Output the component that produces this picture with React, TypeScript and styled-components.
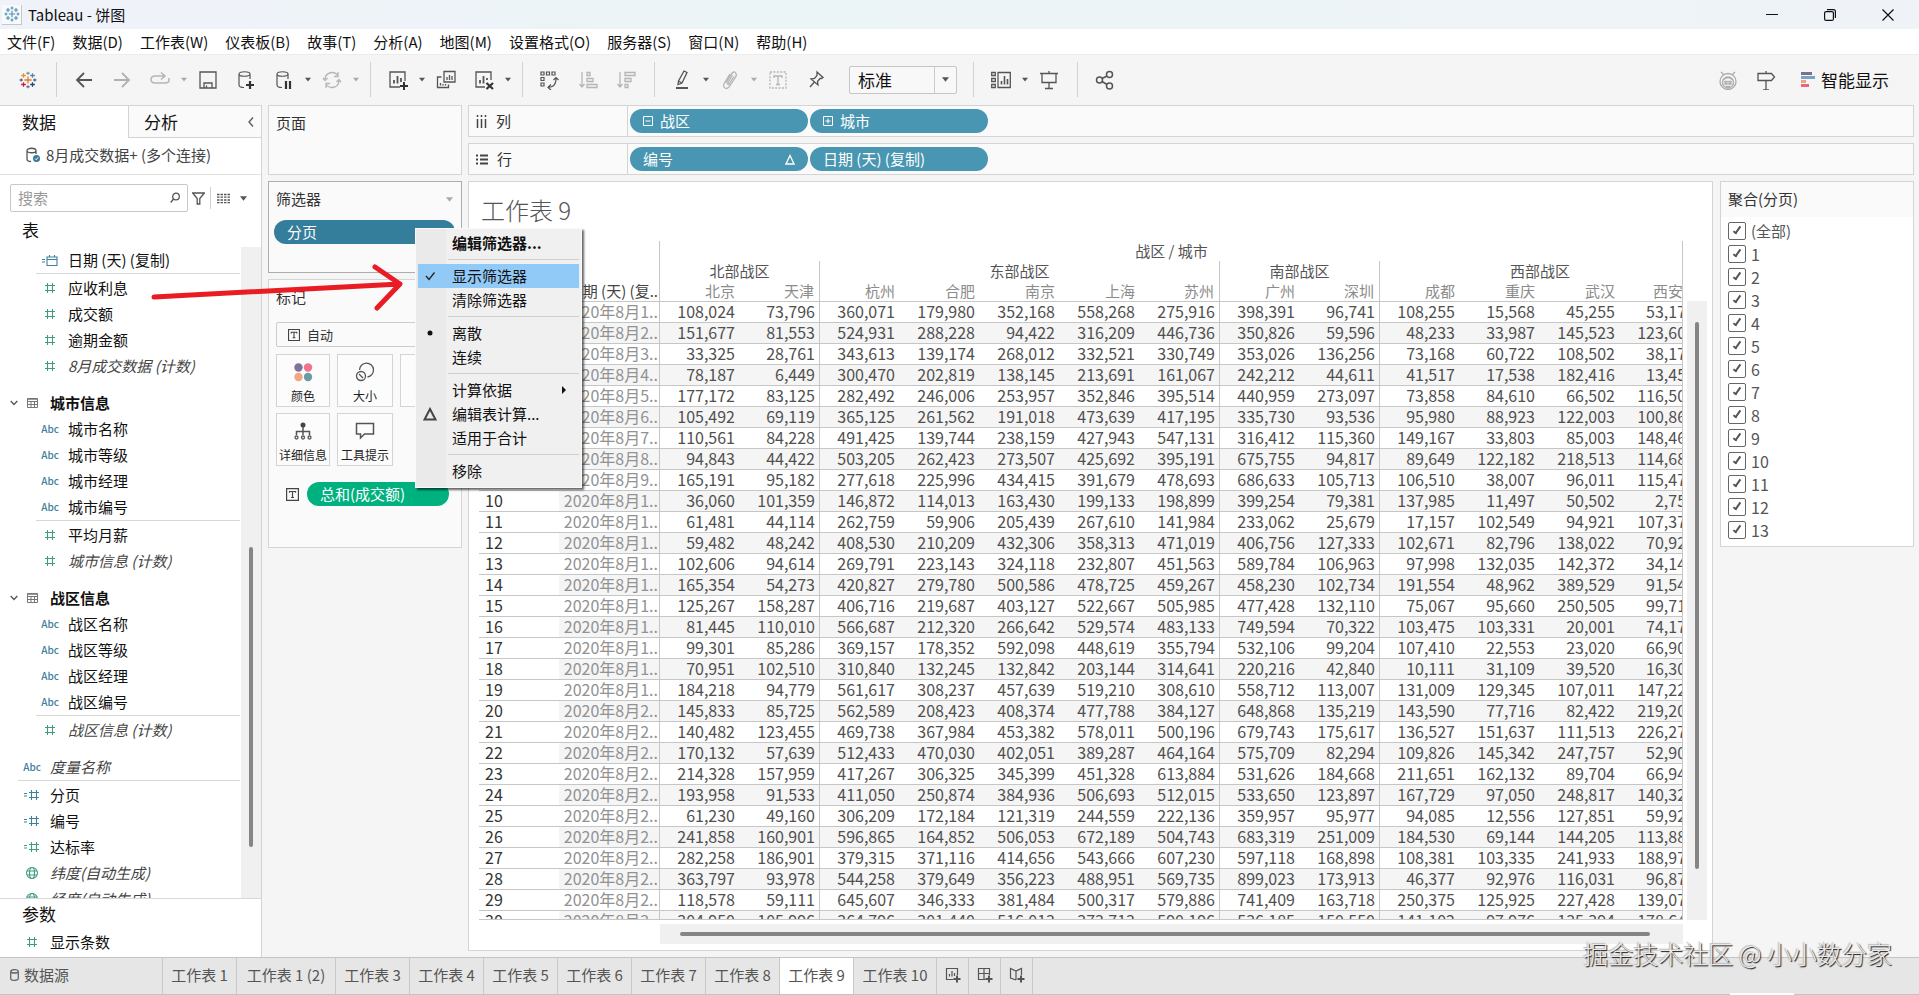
import React from "react";
import styled, { createGlobalStyle, css } from "styled-components";

const sans = `"Noto Sans CJK SC", "Noto Sans", sans-serif`;

const GlobalStyle = createGlobalStyle`
  *, *::before, *::after { box-sizing: border-box; }
  body { margin: 0; background: #f5f5f5; color: #111; font: 15px/20px ${sans}; }
  button, input, select { font: inherit; color: inherit; }
  svg { display: block; flex: none; }
`;

/* ---------- icons ---------- */

type IconProps = { w?: number; h?: number; color?: string; sw?: number; children: React.ReactNode };

const Icon = ({ w = 20, h = 20, color = "#555", sw = 1.3, children }: IconProps) => (
  <svg width={w} height={h} viewBox={`0 0 ${w} ${h}`} fill="none" stroke={color} strokeWidth={sw} aria-hidden="true">
    {children}
  </svg>
);

const crosses: [number, number, number, string][] = [
  [10, 10, 4, "#e8762c"],
  [10, 2.5, 1.8, "#7199a6"],
  [10, 17.5, 1.8, "#7b6f9b"],
  [2.5, 10, 1.8, "#5b6591"],
  [17.5, 10, 1.8, "#5b6591"],
  [5, 5, 2.6, "#eb912c"],
  [15, 5, 2.6, "#59879b"],
  [5, 15, 2.6, "#c72035"],
  [15, 15, 2.6, "#1f447e"],
];

const Logo = ({ size = 20, mono }: { size?: number; mono?: string }) => (
  <svg width={size} height={size} viewBox="0 0 20 20" aria-hidden="true">
    {crosses.map(([x, y, r, c]) => (
      <path key={`${x}-${y}`} d={`M${x - r} ${y}H${x + r}M${x} ${y - r}V${y + r}`} stroke={mono || c} strokeWidth={1.4} />
    ))}
  </svg>
);

const CaretIcon = ({ color = "#555", w = 7 }: { color?: string; w?: number }) => (
  <svg width={w} height="5" viewBox="0 0 8 5" aria-hidden="true">
    <path d="M0 0H8L4 5Z" fill={color} />
  </svg>
);

const BackIcon = () => <Icon sw={1.8}><path d="M18 10H3M10 3L3 10L10 17" /></Icon>;
const ForwardIcon = () => <Icon sw={1.8} color="#b0b0b0"><path d="M2 10H17M10 3L17 10L10 17" /></Icon>;
const RedoIcon = () => (
  <Icon color="#b5b5b5" sw={1.5}><path d="M14 6H5Q1 6 1 9.500T5 13H15Q19 13 19 10V8M11 2.500L15 6L11 9.500" /></Icon>
);
const SaveIcon = () => <Icon><path d="M2 2H18V18H2ZM6 18V13H14V18M8.500 18V15.500" /></Icon>;
const Cylinder = () => <path d="M3 4V15C3 17 6 17.500 8 17.500M14 4V9M3 4C3 1 14 1 14 4S3 7 3 4" />;
const AddDataIcon = () => (
  <Icon sw={1.2}><Cylinder /><path d="M14 11V19M10 15H18" stroke="#333" strokeWidth="2.200" /></Icon>
);
const PauseDataIcon = () => (
  <Icon sw={1.2}><Cylinder /><path d="M12 11V19M16 11V19" stroke="#333" strokeWidth="2.200" /></Icon>
);
const RefreshIcon = () => (
  <Icon color="#b5b5b5"><path d="M3 9A7 7 0 0 1 16 6M17 11A7 7 0 0 1 4 14M16 2V6.500H12M4 18V13.500H8M1 8L3 10.500L5.500 8M14.500 12L17 9.500L19 12" /></Icon>
);
const NewSheetIcon = () => (
  <Icon><path d="M12 17H2V2H17V11" /><path d="M6 13.500V10M9.500 13.500V6M13 12V8" strokeWidth="1.800" /><path d="M16 12V20M12 16H20" stroke="#333" strokeWidth="2" /></Icon>
);
const DuplicateIcon = () => (
  <Icon><path d="M8 1.500H19V12H8ZM5.500 7H1.500V17.500H12.500V14.500" /><path d="M11 10V7M13.500 10V5M16 10V6M4.500 15.500V13M7 15.500V14M9.500 15.500V14" /></Icon>
);
const ClearIcon = () => (
  <Icon><path d="M11 17H2V2H17V10" /><path d="M6 13.500V10M9.500 13.500V6M13 10V8" strokeWidth="1.800" /><path d="M12.500 13L19 19M19 13L12.500 19" stroke="#333" strokeWidth="2.200" /></Icon>
);
const SwapIcon = () => (
  <Icon sw={1.2}><path d="M1 2H4V5H1ZM6.500 2H9.500V5H6.500ZM12 2H15V5H12ZM1 7.500H4V10.500H1ZM1 13H4V16H1ZM8 17.500Q16.500 17 16 8M13.500 10L16 7.500L18.500 10M11 14.500L8 17.500L11 20" /></Icon>
);
const SortAscIcon = () => (
  <Icon color="#b5b5b5"><path d="M4 2V17M1.500 14L4 17L6.500 14M9 2.500H12V5.500H9ZM9 8.500H15V11.500H9ZM9 14.500H19V17.500H9Z" /></Icon>
);
const SortDescIcon = () => (
  <Icon color="#b5b5b5"><path d="M4 2V17M1.500 14L4 17L6.500 14M9 2.500H19V5.500H9ZM9 8.500H15V11.500H9ZM9 14.500H12V17.500H9Z" /></Icon>
);
const HighlightIcon = () => (
  <Icon><path d="M12 1L15 2.500L10 13L6 14.500L6.500 11ZM6.500 11L10 13" /><path d="M4 18H16" strokeWidth="2" /></Icon>
);
const ClipIcon = () => (
  <Icon color="#b5b5b5"><path d="M6 13L11 4.500Q14 0 16 3.500Q17 5 15 8L9 17Q6 20 4 17Q3 15 5 12L10 4M12.500 5L7.500 13.500Q8 15.500 9.500 13.500L14 6.500" /></Icon>
);
const TextBoxIcon = () => (
  <Icon color="#b5b5b5"><path d="M2 2H18V18H2Z" strokeDasharray="2 1.400" /><path d="M6 8V6H14V8M10 6V14.500M8 14.500H12" /></Icon>
);
const PinIcon = () => (
  <Icon><path d="M11 2L17 7.500L15.500 8.500H14L11.500 11.500L12 15L5 9L8.500 8.500L11 5.500ZM8.500 12L4 17" /></Icon>
);
const CardsIcon = () => (
  <Icon><path d="M.7 2.500H4.300V5.500H.7ZM.7 8.500H4.300V11.500H.7ZM.7 14.500H4.300V17.500H.7ZM7 2.500H19.300V17.500H7Z" /><path d="M10.500 14.500V11M13.500 14.500V6M16.500 14.500V9" strokeWidth="1.600" /></Icon>
);
const PresentIcon = () => <Icon><path d="M1 3.500H19M3 3.500V12.500H17V3.500M10 1V3M10 12.500V18.500M6 18.500H14" /></Icon>;
const ShareIcon = () => (
  <Icon sw={1.5}><circle cx="4.500" cy="10" r="3" /><circle cx="14.500" cy="4.500" r="3" /><circle cx="14.500" cy="16" r="3" /><path d="M7 8.500L12 6M7 11.500L12 14.500" /></Icon>
);
const RobotIcon = () => (
  <Icon color="#aaa"><circle cx="10" cy="11.500" r="8" /><circle cx="10" cy="12.500" r="5.500" /><path d="M3 2L6 5M17 2L14 5M5 10Q10 5 15 10M7 11.500H9V14H7ZM11 11.500H13V14H11ZM8 16.500H12" /></Icon>
);
const SignIcon = () => <Icon><path d="M2 3.500H15.500L18.500 7L15.500 10.500H2ZM10 1V3.500M10 10.500V20M7 20H13" /></Icon>;
const ShowMeIcon = () => (
  <svg width="14" height="16" aria-hidden="true">
    <rect width="11" height="3" fill="#7d6d93" /><rect y="4" width="14" height="3" fill="#76a3c6" />
    <rect y="8" width="5" height="3" fill="#eda37e" /><rect y="12" width="8" height="3" fill="#e8677c" />
  </svg>
);

const blue = "#417e9c";
const green = "#3f9c83";

const HashIcon = ({ color }: { color: string }) => (
  <Icon w={12} h={12} color={color} sw={1.1}><path d="M3.500 1V11M8.500 1V11M1 3.500H11M1 8.500H11" /></Icon>
);
const CalcHashIcon = ({ color }: { color: string }) => (
  <Icon w={16} h={12} color={color} sw={1.1}><path d="M7.500 1V11M12.500 1V11M5 3.500H15M5 8.500H15M0 4.500H3M0 7H3" /></Icon>
);
const CalcDateIcon = () => (
  <Icon w={16} h={13} color={blue} sw={1.1}><path d="M5 3H15V11.500H5ZM5 5.500H15M7.500 1V3.500M12.500 1V3.500M0 5.500H3M0 8H3" /></Icon>
);
const GlobeIcon = () => (
  <Icon w={14} h={14} color={green} sw={1.1}><circle cx="7" cy="7" r="5.500" /><ellipse cx="7" cy="7" rx="2.500" ry="5.500" /><path d="M2 5H12M2 9H12" /></Icon>
);
const TableIcon = () => (
  <Icon w={12} h={12} color="#777" sw={1}><path d="M.5 1.500H10.500V10.500H.5ZM.5 4.500H10.500M.5 7.500H10.500M4 4.500V10.500M7.500 4.500V10.500" /><path d="M.5 2H10.500" strokeWidth="1.500" /></Icon>
);
const ChevronIcon = () => <Icon w={8} h={6} color="#555"><path d="M.7 1L4 4.500L7.300 1" /></Icon>;
const TIcon = ({ size = 13 }: { size?: number }) => (
  <svg width={size} height={size} viewBox="0 0 13 13" fill="none" stroke="#444" strokeWidth="1.200" aria-hidden="true">
    <path d="M.6 .6H12.400V12.400H.6ZM3.500 4.800V3.500H9.500V4.800M6.500 3.500V9.500M5 9.500H8" />
  </svg>
);

/* ---------- page frame ---------- */

const Page = styled.div`
  position: relative;
  display: flex;
  flex-direction: column;
  height: 100vh;
  overflow: hidden;
`;

const TitleBar = styled.header`
  display: flex;
  align-items: center;
  gap: 6px;
  flex: none;
  height: 29px;
  padding: 0 2px;
  background: linear-gradient(90deg, #f0f2f9, #ebf4f7 40%, #eff3f8);
`;

const AppBadge = styled.span`
  display: grid;
  place-items: center;
  width: 20px;
  height: 20px;
  border: solid #c3c8cf;
  border-width: 0 1px 1px 0;
  background: #f7f9fb;
`;

const TitleText = styled.h1`
  flex: 1;
  margin: 0;
  font-size: 15px;
  font-weight: 400;
`;

const WindowControls = styled.div`
  display: flex;
`;

const WindowButton = styled.button`
  display: grid;
  place-items: center;
  width: 58px;
  height: 27px;
  padding: 0;
  border: 0;
  background: none;
`;

const MenuBar = styled.nav`
  display: flex;
  align-items: center;
  gap: 17px;
  flex: none;
  height: 25px;
  padding: 0 7px;
  background: #fff;
`;

const MenuButton = styled.button`
  padding: 0;
  border: 0;
  background: none;
  color: #111;
`;

const Toolbar = styled.div`
  display: flex;
  align-items: center;
  flex: none;
  height: 51px;
  padding: 0 30px 1px 9px;
  border-top: 1px solid #ececec;
  background: #f5f5f5;
`;

const Tool = styled.button`
  display: grid;
  place-items: center;
  width: 38px;
  height: 32px;
  padding: 0;
  border: 0;
  background: none;
`;

const CaretTool = styled(Tool)`
  width: 10px;
`;

const Divider = styled.span`
  width: 1px;
  height: 35px;
  margin: 0 8px 0 9px;
  background: #d2d2d2;
`;

const SelectBox = styled.span<{ $w?: number }>`
  display: flex;
  align-items: center;
  position: relative;
  width: ${(p) => (p.$w ? `${p.$w}px` : "auto")};
`;

const FitBox = styled(SelectBox)`
  margin: 0 7px 0 14px;
`;

const FitSelect = styled.select`
  appearance: none;
  width: 100%;
  height: 28px;
  padding: 0 8px;
  border: 1px solid #c6c6c6;
  border-radius: 2px;
  background: linear-gradient(#ccc, #ccc) 84px 0 / 1px 26px no-repeat #f8f8f8;
  font-size: 17px;
  line-height: 24px;
`;

const SelectCaret = styled.span`
  position: absolute;
  right: 8px;
  pointer-events: none;
`;

const Spacer = styled.span`
  flex: 1;
`;

const ShowMe = styled.button`
  display: flex;
  align-items: center;
  gap: 6px;
  margin-left: 16px;
  padding: 0;
  border: 0;
  background: none;
  font-size: 17px;
  line-height: 24px;
`;

const Workspace = styled.main`
  display: flex;
  gap: 6px;
  flex: 1;
  min-height: 0;
  padding-right: 5px;
`;

/* ---------- data pane ---------- */

const DataPane = styled.aside`
  display: flex;
  flex-direction: column;
  flex: none;
  width: 262px;
  border: solid #d4d4d4;
  border-width: 1px 1px 0 0;
  background: #fff;
`;

const PaneTabs = styled.div`
  display: flex;
  flex: none;
  height: 32px;
`;

const PaneTab = styled.button<{ $active?: boolean }>`
  display: flex;
  align-items: center;
  justify-content: space-between;
  width: ${(p) => (p.$active ? "128px" : "133px")};
  padding: 0 7px 0 ${(p) => (p.$active ? "22px" : "15px")};
  border: 0 solid #d4d4d4;
  border-width: ${(p) => (p.$active ? "0" : "0 0 1px 1px")};
  background: ${(p) => (p.$active ? "#fff" : "#fafafa")};
  font-size: 17px;
  line-height: 24px;
`;

const SourceRow = styled.button`
  display: flex;
  align-items: center;
  gap: 5px;
  flex: none;
  height: 37px;
  padding: 0 26px 2px;
  border: 0;
  border-bottom: 1px solid #e2e2e2;
  background: none;
  color: #444;
`;

const SearchRow = styled.div`
  display: flex;
  align-items: center;
  flex: none;
  height: 28px;
  margin: 9px 10px 0;
`;

const SearchField = styled.label`
  display: flex;
  align-items: center;
  width: 178px;
  height: 28px;
  padding: 0 7px;
  border: 1px solid #c8c8c8;
  border-radius: 2px;
`;

const SearchInput = styled.input`
  flex: 1;
  min-width: 0;
  padding: 0;
  border: 0;
  outline: 0;
  background: none;
  &::placeholder { color: #999; opacity: 1; }
`;

const SearchTool = styled.button<{ $ruled?: boolean }>`
  display: flex;
  align-items: center;
  gap: 10px;
  height: 22px;
  padding: 0 ${(p) => (p.$ruled ? 6 : 5)}px 0 ${(p) => (p.$ruled ? 6 : 4)}px;
  border: 0;
  border-left: ${(p) => (p.$ruled ? "1px solid #d0d0d0" : "0")};
  background: none;
`;

const PaneHeading = styled.h2`
  flex: none;
  margin: 0;
  padding-left: 22px;
  font-size: 17px;
  font-weight: 400;
  line-height: 35px;
`;

const FieldScroller = styled.div`
  display: flex;
  flex: 1;
  min-height: 0;
  overflow: hidden;
`;

const FieldList = styled.ul`
  flex: 1;
  margin: 0;
  padding: 0;
  list-style: none;
`;

const FieldItem = styled.li<{ $depth: number; $ruled?: boolean; $gap?: boolean }>`
  margin-top: ${(p) => (p.$gap ? "11px" : "0")};
  ${(p) =>
    p.$ruled &&
    css`
      &::after {
        content: "";
        display: block;
        height: 1px;
        margin: 0 1px 1px ${p.$depth * 18}px;
        background: #d8d8d8;
      }
    `}
`;

const FieldButton = styled.button<{ $depth: number; $look?: "italic" | "bold" }>`
  display: grid;
  grid-template-columns: 36px 1fr;
  align-items: center;
  width: 100%;
  height: 26px;
  padding: 0 0 0 ${(p) => p.$depth * 18 - 4}px;
  border: 0;
  background: none;
  text-align: left;
  font-weight: ${(p) => (p.$look === "bold" ? 700 : 400)};
  font-style: ${(p) => (p.$look === "italic" ? "italic" : "normal")};
  color: ${(p) => (p.$look === "italic" ? "#444" : "#111")};
`;

const FieldIcon = styled.span`
  display: grid;
  justify-items: center;
  width: 36px;
`;

const GroupIcons = styled.span`
  display: flex;
  align-items: center;
  gap: 9px;
  width: 36px;
  margin-left: -4px;
`;

const AbcMark = styled.span`
  color: ${blue};
  font-size: 10px;
  font-weight: 500;
  font-style: normal;
`;

const Track = styled.div<{ $horizontal?: boolean }>`
  display: flex;
  flex: none;
  background: #f0f0f0;
  ${(p) => (p.$horizontal ? "height: 20px;" : "width: 20px;")}
`;

const ListTrack = styled(Track)`
  padding: 300px 8px 51px;
`;

const Thumb = styled.span`
  flex: 1;
  border-radius: 2px;
  background: #858585;
`;

const Parameters = styled.section`
  flex: none;
  height: 59px;
  border-top: 1px solid #d8d8d8;
`;

const ParamHeading = styled(PaneHeading)`
  line-height: 30px;
`;

/* ---------- cards ---------- */

const CardColumn = styled.section`
  display: flex;
  flex-direction: column;
  gap: 6px;
  flex: none;
  width: 194px;
`;

const Card = styled.section<{ $h: number; $strong?: boolean }>`
  position: relative;
  flex: none;
  height: ${(p) => p.$h}px;
  padding: 0 6px;
  border: 1px solid ${(p) => (p.$strong ? "#adadad" : "#d4d4d4")};
  background: #fafafa;
`;

const CardTitle = styled.h3`
  display: flex;
  align-items: center;
  justify-content: space-between;
  height: 36px;
  margin: 0;
  padding: 0 2px 2px 1px;
  color: #333;
  font-size: 15px;
  font-weight: 400;
`;

const Pill = styled.button<{ $bg: string; $w?: string }>`
  display: flex;
  align-items: center;
  gap: 7px;
  flex: none;
  width: ${(p) => p.$w || "178px"};
  height: 24px;
  padding: 0 13px;
  border: 0;
  border-radius: 12px;
  background: ${(p) => p.$bg};
  color: #fff;
`;

const PillFilter = styled(Pill)`
  margin: 2px 0 0 -1px;
`;

const MarkSelect = styled.select`
  appearance: none;
  width: 100%;
  height: 25px;
  padding: 0 0 0 30px;
  border: 1px solid #ccc;
  border-radius: 2px;
  background: none;
  color: #333;
  font-size: 13px;
`;

const MarkBox = styled(SelectBox)`
  margin: 6px 1px 7px;
`;

const MarkLead = styled.span`
  position: absolute;
  left: 12px;
`;

const MarkGrid = styled.div`
  display: grid;
  grid-template-columns: 54px 56px 56px;
  grid-auto-rows: 53px;
  gap: 6px 7px;
  margin: 0 1px;
`;

const MarkButton = styled.button`
  display: flex;
  flex-direction: column;
  align-items: center;
  justify-content: space-between;
  padding: 7px 0 1px;
  border: 1px solid #d4d4d4;
  background: #fcfcfc;
  color: #222;
  font-size: 12px;
  line-height: 18px;
  white-space: nowrap;
`;

const MarkPillRow = styled.div`
  display: flex;
  align-items: center;
  gap: 8px;
  margin: 16px 0 0 11px;
`;

/* ---------- context menu ---------- */

const ContextMenu = styled.ul`
  position: absolute;
  z-index: 3;
  top: 46px;
  left: 146px;
  width: 167px;
  margin: 0;
  padding: 2px 2px 4px;
  border: 1px solid #fafafa;
  background: linear-gradient(90deg, #eaeaea 30px, #f0f0f0 30px);
  box-shadow: 2px 2px 2px rgba(0, 0, 0, 0.6);
  list-style: none;
`;

const ContextItem = styled.button<{ $on?: boolean; $bold?: boolean }>`
  display: grid;
  grid-template-columns: 23px 1fr 17px;
  align-items: center;
  column-gap: 11px;
  width: 100%;
  height: 24px;
  padding: 0;
  border: 0;
  background: ${(p) => (p.$on ? "#91c9f7" : "none")};
  text-align: left;
  white-space: nowrap;
  font-weight: ${(p) => (p.$bold ? 700 : 400)};
`;

const ContextMark = styled.span`
  display: grid;
  justify-items: center;
`;

const ContextRule = styled.li`
  height: 9px;
  margin-left: 30px;
  border: solid transparent;
  border-width: 4px 0;
  background: #cfcfcf;
  background-clip: padding-box;
`;

/* ---------- shelves and view ---------- */

const ViewColumn = styled.section`
  display: flex;
  flex-direction: column;
  gap: 6px;
  flex: 1;
  min-width: 0;
  padding-bottom: 6px;
`;

const Shelf = styled.div`
  display: flex;
  align-items: center;
  gap: 2px;
  flex: none;
  height: 32px;
  border: 1px solid #d4d4d4;
  background: #fafafa;
`;

const ShelfLabel = styled.span`
  display: flex;
  align-items: center;
  gap: 9px;
  width: 159px;
  height: 30px;
  padding-left: 7px;
  border-right: 1px solid #d4d4d4;
  color: #333;
`;

const ViewRow = styled.div`
  display: flex;
  align-items: flex-start;
  gap: 7px;
  flex: 1;
  min-height: 0;
`;

const Sheet = styled.article`
  display: grid;
  grid-template-columns: minmax(0, 1fr) 20px;
  grid-template-rows: 59px minmax(0, 1fr) 20px;
  gap: 0 4px;
  flex: 1;
  min-width: 0;
  height: 100%;
  padding: 0 5px 6px 10px;
  border: 1px solid #d4d4d4;
  background: #fff;
`;

const SheetTitle = styled.h2`
  grid-column: 1 / -1;
  margin: 0;
  padding: 0 2px;
  color: #555;
  font-size: 24px;
  font-weight: 300;
  line-height: 56px;
`;

const TableClip = styled.div`
  overflow: hidden;
  margin-bottom: 4px;
  border: solid #c6c6c6;
  border-width: 0 1px 1px 0;
`;

const SheetTrackV = styled(Track)`
  margin: 60px 0 4px;
  padding: 21px 8px 51px;
`;

const SheetTrackH = styled(Track)`
  margin-left: 181px;
  padding: 8px 33px 8px 20px;
`;

const Crosstab = styled.table`
  table-layout: fixed;
  width: 1221px;
  border-collapse: separate;
  border-spacing: 0;
  color: #505050;
  font-size: 16px;
  line-height: 18px;
  white-space: nowrap;
`;

const Head = styled.th<{ $edge?: boolean; $align?: string; $tone?: string; $base?: boolean; $pad?: number }>`
  height: ${(p) => (p.$base ? 21 : 20)}px;
  padding: 0 ${(p) => p.$pad ?? 5}px 1px 0;
  border: solid #c6c6c6;
  border-width: 0 ${(p) => (p.$edge ? 1 : 0)}px ${(p) => (p.$base ? 1 : 0)}px 0;
  color: ${(p) => p.$tone || "#8c8c8c"};
  font-size: 15px;
  font-weight: 400;
  text-align: ${(p) => p.$align || "right"};
`;

const Cell = styled.td<{ $edge?: boolean; $cut?: boolean }>`
  height: 21px;
  padding: 0 ${(p) => (p.$cut ? 14 : p.$edge ? 4 : 5)}px 2px 0;
  border: solid #c6c6c6;
  border-width: 0 ${(p) => (p.$edge ? 1 : 0)}px 1px 0;
  text-align: right;
`;

const IndexCell = styled.th`
  padding: 0 6px 2px;
  border-bottom: 1px solid #c6c6c6;
  background: #fff;
  color: #333;
  font-weight: 400;
  text-align: left;
`;

const DateCell = styled(Cell)`
  padding: 0 1px 2px 0;
  color: #929292;
`;

const Row = styled.tr`
  &:nth-child(even) { background: #f5f5f5; }
`;

/* ---------- quick filter ---------- */

const QuickFilter = styled.fieldset`
  flex: none;
  width: 194px;
  margin: 0;
  padding: 0 0 5px;
  border: 1px solid #d4d4d4;
  background: #fff;
`;

const QuickTitle = styled.legend`
  float: left;
  width: 100%;
  height: 35px;
  margin-bottom: 2px;
  padding: 0 7px;
  background: #fafafa;
  color: #333;
  line-height: 34px;
`;

const CheckRow = styled.label<{ $small?: boolean }>`
  display: flex;
  align-items: center;
  gap: 5px;
  clear: both;
  height: 23px;
  padding-left: 7px;
  color: #555;
  font-size: ${(p) => (p.$small ? 15 : 16)}px;
`;

const Check = styled.input`
  appearance: none;
  display: grid;
  place-items: center;
  width: 18px;
  height: 18px;
  margin: 0;
  border: 1px solid #666;
  border-radius: 2px;
  background: #fff;
  &:checked::before {
    content: "";
    width: 4px;
    height: 9px;
    margin-bottom: 3px;
    border: solid #555;
    border-width: 0 2px 2px 0;
    transform: rotate(35deg);
  }
`;

/* ---------- sheet tabs and overlays ---------- */

const TabBar = styled.footer`
  display: flex;
  flex: none;
  height: 38px;
  border: solid #c4c4c4;
  border-width: 1px 0;
  background: #e6e6e6;
`;

const SheetTab = styled.button<{ $active?: boolean; $w: number }>`
  flex: none;
  width: ${(p) => p.$w}px;
  padding: 0 0 2px;
  border: 0;
  border-right: 1px solid #c8c8c8;
  background: ${(p) => (p.$active ? "#fff" : "none")};
  color: #555;
`;

const SourceTab = styled(SheetTab)`
  display: flex;
  align-items: center;
  gap: 5px;
  padding-left: 10px;
`;

const NewTab = styled(SheetTab)`
  display: grid;
  place-items: center;
`;

const Arrow = styled.svg`
  position: absolute;
  z-index: 2;
  top: 260px;
  left: 148px;
  pointer-events: none;
`;

const Watermark = styled.div`
  position: absolute;
  right: 27px;
  bottom: 25px;
  color: #e9e9e9;
  font-size: 25px;
  font-weight: 300;
  line-height: 34px;
  text-shadow: 1px 1px 1px #111, -1px -1px 1px #bbb;
`;

const EdgeStrip = styled.span`
  position: absolute;
  right: 125px;
  bottom: 0;
  width: 64px;
  height: 2px;
  background: #fff;
`;

/* ---------- data ---------- */

const menus = ["文件(F)", "数据(D)", "工作表(W)", "仪表板(B)", "故事(T)", "分析(A)", "地图(M)", "设置格式(O)", "服务器(S)", "窗口(N)", "帮助(H)"];

type Kind = "date" | "num" | "abc" | "group" | "cnumB" | "cnumG" | "geo";
type Field = { name: string; kind: Kind; depth: number; italic?: boolean; ruled?: boolean; gap?: boolean };

const fields: Field[] = [
  { name: "日期 (天) (复制)", kind: "date", depth: 2, ruled: true },
  { name: "应收利息", kind: "num", depth: 2 },
  { name: "成交额", kind: "num", depth: 2 },
  { name: "逾期金额", kind: "num", depth: 2 },
  { name: "8月成交数据 (计数)", kind: "num", depth: 2, italic: true },
  { name: "城市信息", kind: "group", depth: 1, gap: true },
  { name: "城市名称", kind: "abc", depth: 2 },
  { name: "城市等级", kind: "abc", depth: 2 },
  { name: "城市经理", kind: "abc", depth: 2 },
  { name: "城市编号", kind: "abc", depth: 2, ruled: true },
  { name: "平均月薪", kind: "num", depth: 2 },
  { name: "城市信息 (计数)", kind: "num", depth: 2, italic: true },
  { name: "战区信息", kind: "group", depth: 1, gap: true },
  { name: "战区名称", kind: "abc", depth: 2 },
  { name: "战区等级", kind: "abc", depth: 2 },
  { name: "战区经理", kind: "abc", depth: 2 },
  { name: "战区编号", kind: "abc", depth: 2, ruled: true },
  { name: "战区信息 (计数)", kind: "num", depth: 2, italic: true },
  { name: "度量名称", kind: "abc", depth: 1, italic: true, gap: true, ruled: true },
  { name: "分页", kind: "cnumB", depth: 1 },
  { name: "编号", kind: "cnumB", depth: 1 },
  { name: "达标率", kind: "cnumG", depth: 1 },
  { name: "纬度(自动生成)", kind: "geo", depth: 1, italic: true },
  { name: "经度(自动生成)", kind: "geo", depth: 1, italic: true },
];

const kindIcon: Record<Kind, React.ReactNode> = {
  date: <CalcDateIcon />,
  num: <HashIcon color={green} />,
  abc: <AbcMark>Abc</AbcMark>,
  group: null,
  cnumB: <CalcHashIcon color={blue} />,
  cnumG: <CalcHashIcon color={green} />,
  geo: <GlobeIcon />,
};

const regions: [string, number][] = [["北部战区", 2], ["东部战区", 5], ["南部战区", 2], ["西部战区", 4]];
const cities = ["北京", "天津", "杭州", "合肥", "南京", "上海", "苏州", "广州", "深圳", "成都", "重庆", "武汉", "西安"];
const edges = [1, 6, 8];

const rows = `
108,024 73,796 360,071 179,980 352,168 558,268 275,916 398,391 96,741 108,255 15,568 45,255 53,17
151,677 81,553 524,931 288,228 94,422 316,209 446,736 350,826 59,596 48,233 33,987 145,523 123,60
33,325 28,761 343,613 139,174 268,012 332,521 330,749 353,026 136,256 73,168 60,722 108,502 38,17
78,187 6,449 300,470 202,819 138,145 213,691 161,067 242,212 44,611 41,517 17,538 182,416 13,45
177,172 83,125 282,492 246,006 253,957 352,846 395,514 440,959 273,097 73,858 84,610 66,502 116,50
105,492 69,119 365,125 261,562 191,018 473,639 417,195 335,730 93,536 95,980 88,923 122,003 100,86
110,561 84,228 491,425 139,744 238,159 427,943 547,131 316,412 115,360 149,167 33,803 85,003 148,46
94,843 44,422 503,205 262,423 273,507 425,692 395,191 675,755 94,817 89,649 122,182 218,513 114,68
165,191 95,182 277,618 225,996 434,415 391,679 478,693 686,633 105,713 106,510 38,007 96,011 115,47
36,060 101,359 146,872 114,013 163,430 199,133 198,899 399,254 79,381 137,985 11,497 50,502 2,75
61,481 44,114 262,759 59,906 205,439 267,610 141,984 233,062 25,679 17,157 102,549 94,921 107,37
59,482 48,242 408,530 210,209 432,306 358,313 471,019 406,756 127,333 102,671 82,796 138,022 70,92
102,606 94,614 269,791 223,143 324,118 232,807 451,563 589,784 106,963 97,998 132,035 142,372 34,14
165,354 54,273 420,827 279,780 500,586 478,725 459,267 458,230 102,734 191,554 48,962 389,529 91,54
125,267 158,287 406,716 219,687 403,127 522,667 505,985 477,428 132,110 75,067 95,660 250,505 99,71
81,445 110,010 566,687 212,320 266,642 529,574 483,133 749,594 70,322 103,475 103,331 20,001 74,17
99,301 85,286 369,157 178,352 592,098 448,619 355,794 532,106 99,204 107,410 22,553 23,020 66,90
70,951 102,510 310,840 132,245 132,842 203,144 314,641 220,216 42,840 10,111 31,109 39,520 16,30
184,218 94,779 561,617 308,237 457,639 519,210 308,610 558,712 113,007 131,009 129,345 107,011 147,22
145,833 85,725 562,589 208,423 408,374 477,788 384,127 648,868 135,219 143,590 77,716 82,422 219,20
140,482 123,455 469,738 367,984 453,382 578,011 500,196 679,743 175,617 136,527 151,637 111,513 226,27
170,132 57,639 512,433 470,030 402,051 389,287 464,164 575,709 82,294 109,826 145,342 247,757 52,90
214,328 157,959 417,267 306,325 345,399 451,328 613,884 531,626 184,668 211,651 162,132 89,704 66,94
193,958 91,533 411,050 250,874 384,936 506,693 512,015 533,650 123,897 167,729 97,050 248,817 140,32
61,230 49,160 306,209 172,184 121,319 244,559 222,136 359,957 95,977 94,085 12,556 127,851 59,92
241,858 160,901 596,865 164,852 506,053 672,189 504,743 683,319 251,009 184,530 69,144 144,205 113,88
282,258 186,901 379,315 371,116 414,656 543,666 607,230 597,118 168,898 108,381 103,335 241,933 188,97
363,797 93,978 544,258 379,649 356,223 488,951 569,735 899,023 173,913 46,377 92,976 116,031 96,87
118,578 59,111 645,607 346,333 381,484 500,317 579,886 741,409 163,718 250,375 125,925 227,428 139,07
304,950 105,996 364,796 301,440 516,013 373,713 590,196 536,185 150,550 141,102 97,976 135,394 178,64
`.trim().split("\n").map((line) => line.split(" "));

type MenuEntry = { text?: string; mark?: "tick" | "dot" | "delta"; on?: boolean; bold?: boolean; sub?: boolean };

const contextEntries: MenuEntry[] = [
  { text: "编辑筛选器...", bold: true },
  {},
  { text: "显示筛选器", mark: "tick", on: true },
  { text: "清除筛选器" },
  {},
  { text: "离散", mark: "dot" },
  { text: "连续" },
  {},
  { text: "计算依据", sub: true },
  { text: "编辑表计算...", mark: "delta" },
  { text: "适用于合计" },
  {},
  { text: "移除" },
];

const contextMarks = {
  tick: <Icon w={10} h={10} color="#222"><path d="M1 5L4 8.500L9.500 1.500" /></Icon>,
  dot: <Icon w={6} h={6} color="none"><circle cx="3" cy="3" r="2.500" fill="#111" /></Icon>,
  delta: <Icon w={14} h={14} color="#444" sw={2}><path d="M7 2L12.500 12.500H1.500Z" /></Icon>,
};

const sheets: [string, number][] = [["1", 74], ["1 (2)", 99], ["3", 74], ["4", 74], ["5", 74], ["6", 74], ["7", 74], ["8", 74], ["9", 74], ["10", 83]];
const filterValues = ["(全部)", ...Array.from({ length: 13 }, (_, i) => String(i + 1))];

/* ---------- parts ---------- */

const tools: (React.ComponentType | "caret" | "pale" | "rule" | "fit")[] = [
  BackIcon, ForwardIcon, RedoIcon, "pale", SaveIcon, AddDataIcon, PauseDataIcon, "caret", RefreshIcon, "pale", "rule",
  NewSheetIcon, "caret", DuplicateIcon, ClearIcon, "caret", "rule",
  SwapIcon, SortAscIcon, SortDescIcon, "rule",
  HighlightIcon, "caret", ClipIcon, "pale", TextBoxIcon, PinIcon, "fit", "rule",
  CardsIcon, "caret", PresentIcon, "rule", ShareIcon,
];

const ToolbarRow = () => (
  <Toolbar role="toolbar">
    <Tool aria-label="Tableau"><Logo size={18} /></Tool>
    <Divider />
    {tools.map((T, i) => {
      if (T === "rule") return <Divider key={i} />;
      if (T === "caret" || T === "pale")
        return <CaretTool key={i} aria-label="更多"><CaretIcon w={6} color={T === "pale" ? "#aaa" : "#555"} /></CaretTool>;
      if (T === "fit")
        return (
          <FitBox key={i} $w={108}>
            <FitSelect aria-label="适合"><option>标准</option></FitSelect>
            <SelectCaret><CaretIcon /></SelectCaret>
          </FitBox>
        );
      return <Tool key={i} aria-label="工具"><T /></Tool>;
    })}
    <Spacer />
    <Tool aria-label="助手"><RobotIcon /></Tool>
    <Tool aria-label="导览"><SignIcon /></Tool>
    <ShowMe><ShowMeIcon />智能显示</ShowMe>
  </Toolbar>
);

const FieldRow = ({ f }: { f: Field }) => (
  <FieldItem $depth={f.depth} $ruled={f.ruled} $gap={f.gap}>
    <FieldButton $depth={f.depth} $look={f.kind === "group" ? "bold" : f.italic ? "italic" : undefined}>
      {f.kind === "group" ? (
        <GroupIcons><ChevronIcon /><TableIcon /></GroupIcons>
      ) : (
        <FieldIcon>{kindIcon[f.kind]}</FieldIcon>
      )}
      {f.name}
    </FieldButton>
  </FieldItem>
);

const SidePane = () => (
  <DataPane>
    <PaneTabs>
      <PaneTab $active>数据</PaneTab>
      <PaneTab>
        分析
        <Icon w={6} h={10} color="#555"><path d="M5 .5L1 5L5 9.500" /></Icon>
      </PaneTab>
    </PaneTabs>
    <SourceRow>
      <Icon w={15} h={16}>
        <path d="M1 3.500V12Q1 14.500 5 14.500M10 3.500V7M1 3.500C1 .5 10 .5 10 3.500S1 6.500 1 3.500" />
        <circle cx="10.500" cy="11.500" r="3.500" fill="#37799c" stroke="none" />
        <path d="M9 11.500L10.200 12.800L12.200 10.300" stroke="#fff" strokeWidth="1" />
      </Icon>
      8月成交数据+ (多个连接)
    </SourceRow>
    <SearchRow>
      <SearchField>
        <SearchInput aria-label="搜索" placeholder="搜索" />
        <Icon w={10} h={12}><circle cx="6" cy="4.500" r="3.300" /><path d="M3.500 7L.7 10.500" /></Icon>
      </SearchField>
      <SearchTool aria-label="筛选"><Icon w={13} h={13}><path d="M.7 1H12.300L7.800 6.500V12H5.200V6.500Z" /></Icon></SearchTool>
      <SearchTool $ruled aria-label="视图">
        <Icon w={13} h={11}><path d="M0 1.500H13M0 4.200H13M0 7H13M0 9.700H13" strokeDasharray="2.500 1" /></Icon>
        <CaretIcon />
      </SearchTool>
    </SearchRow>
    <PaneHeading>表</PaneHeading>
    <FieldScroller>
      <FieldList>{fields.map((f) => <FieldRow key={f.name} f={f} />)}</FieldList>
      <ListTrack><Thumb /></ListTrack>
    </FieldScroller>
    <Parameters>
      <ParamHeading>参数</ParamHeading>
      <FieldButton $depth={1}><FieldIcon><HashIcon color={green} /></FieldIcon>显示条数</FieldButton>
    </Parameters>
  </DataPane>
);

const Cards = () => (
  <CardColumn>
    <Card $h={70}><CardTitle>页面</CardTitle></Card>
    <Card $h={92} $strong>
      <CardTitle>筛选器<CaretIcon color="#aaa" /></CardTitle>
      <PillFilter $bg="#347d9b" $w="181px">分页</PillFilter>
      <ContextMenu>
        {contextEntries.map((e, i) =>
          e.text ? (
            <li key={i}>
              <ContextItem $on={e.on} $bold={e.bold}>
                <ContextMark>{e.mark && contextMarks[e.mark]}</ContextMark>
                {e.text}
                {e.sub && <svg width="5" height="8" aria-hidden="true"><path d="M0 0L4 4L0 8Z" fill="#111" /></svg>}
              </ContextItem>
            </li>
          ) : (
            <ContextRule key={i} />
          ),
        )}
      </ContextMenu>
    </Card>
    <Card $h={269}>
      <CardTitle>标记</CardTitle>
      <MarkBox>
        <MarkLead><TIcon size={12} /></MarkLead>
        <MarkSelect aria-label="标记类型"><option>自动</option></MarkSelect>
      </MarkBox>
      <MarkGrid>
        <MarkButton>
          <Icon w={20} h={20} color="none">
            <circle cx="5.500" cy="5.500" r="4.200" fill="#82719b" /><circle cx="15" cy="5.500" r="4.200" fill="#f0748b" />
            <circle cx="5.500" cy="15" r="4.200" fill="#f0a683" /><circle cx="15" cy="15" r="4.200" fill="#6b9ba3" />
          </Icon>
          颜色
        </MarkButton>
        <MarkButton>
          <Icon><path d="M4.500 8A7 7 0 1 1 12.500 15" /><circle cx="6" cy="14" r="4.500" /><path d="M4 12L8 16" /></Icon>
          大小
        </MarkButton>
        <MarkButton><TIcon size={18} />文本</MarkButton>
        <MarkButton>
          <Icon>
            <path d="M10 4V14M3.500 14V10.500H16.500V14" strokeWidth="1.500" /><circle cx="10" cy="4" r="2.500" fill="#444" stroke="none" />
            <circle cx="3.500" cy="16.500" r="1.500" /><circle cx="10" cy="16.500" r="1.500" /><circle cx="16.500" cy="16.500" r="1.500" />
          </Icon>
          详细信息
        </MarkButton>
        <MarkButton>
          <Icon sw={1.5}><path d="M1.500 2.500H18.500V13H9.500L5.500 17V13H1.500Z" /></Icon>
          工具提示
        </MarkButton>
      </MarkGrid>
      <MarkPillRow>
        <TIcon />
        <Pill $bg="#00b180" $w="142px">总和(成交额)</Pill>
      </MarkPillRow>
    </Card>
  </CardColumn>
);

const DateTable = () => (
  <Crosstab>
    <colgroup>
      <col width="80" />
      <col width="101" />
      {cities.map((c) => <col key={c} width="80" />)}
    </colgroup>
    <thead>
      <tr>
        <Head colSpan={2} $edge />
        <Head colSpan={13} $align="center" $tone="#555" $pad={17}>战区 / 城市</Head>
      </tr>
      <tr>
        <Head colSpan={2} $edge />
        {regions.map(([name, span], i) => (
          <Head key={name} colSpan={span} $align="center" $tone="#555" $pad={0} $edge={i < 3}>{name}</Head>
        ))}
      </tr>
      <tr>
        <Head $base $tone="#444" $align="left" $pad={0}>编号</Head>
        <Head $base $edge $tone="#444" $pad={1}>日期 (天) (复..</Head>
        {cities.map((c, i) => <Head key={c} $base $edge={edges.includes(i)} $pad={i === 12 ? 17 : 5}>{c}</Head>)}
      </tr>
    </thead>
    <tbody>
      {rows.map((r, n) => (
        <Row key={n}>
          <IndexCell scope="row">{n + 1}</IndexCell>
          <DateCell $edge>2020年8月{String(n + 1)[0]}..</DateCell>
          {r.map((v, i) => <Cell key={i} $edge={edges.includes(i)} $cut={i === 12}>{v}</Cell>)}
        </Row>
      ))}
    </tbody>
  </Crosstab>
);

const PillBox = ({ plus }: { plus?: boolean }) => (
  <Icon w={10} h={10} color="#fff" sw={1}><path d={`M.5 .5H9.500V9.500H.5ZM2.500 5H7.500${plus ? "M5 2.500V7.500" : ""}`} /></Icon>
);

const Apart = styled.span`
  margin-left: auto;
`;

const shelfBlue = "#4996b2";

export default function App() {
  return (
    <Page>
      <GlobalStyle />
      <TitleBar>
        <AppBadge><Logo size={16} mono="#4a8fb5" /></AppBadge>
        <TitleText>Tableau - 饼图</TitleText>
        <WindowControls>
          <WindowButton aria-label="最小化"><Icon w={12} h={12} color="#111" sw={1}><path d="M0 5.500H12" /></Icon></WindowButton>
          <WindowButton aria-label="还原">
            <Icon w={12} h={12} color="#111" sw={1.2}><rect x=".6" y="2.600" width="8.800" height="8.800" rx="1.500" /><path d="M3 .6H9.500Q11.400 .6 11.400 2.500V9" /></Icon>
          </WindowButton>
          <WindowButton aria-label="关闭"><Icon w={12} h={12} color="#111" sw={1.2}><path d="M.5 .5L11.500 11.500M11.500 .5L.5 11.500" /></Icon></WindowButton>
        </WindowControls>
      </TitleBar>
      <MenuBar>{menus.map((m) => <MenuButton key={m}>{m}</MenuButton>)}</MenuBar>
      <ToolbarRow />
      <Workspace>
        <SidePane />
        <Cards />
        <ViewColumn>
          <Shelf>
            <ShelfLabel>
              <Icon w={11} h={13} color="#444"><path d="M1.500 0V2M5.500 0V2M9.500 0V2M1.500 4V13M5.500 4V13M9.500 4V13" strokeWidth="1.500" /></Icon>列
            </ShelfLabel>
            <Pill $bg={shelfBlue}><PillBox />战区</Pill>
            <Pill $bg={shelfBlue}><PillBox plus />城市</Pill>
          </Shelf>
          <Shelf>
            <ShelfLabel>
              <Icon w={12} h={11} color="#444"><path d="M0 1.500H2M0 5.500H2M0 9.500H2M4 1.500H12M4 5.500H12M4 9.500H12" strokeWidth="1.800" /></Icon>行
            </ShelfLabel>
            <Pill $bg={shelfBlue}>
              编号
              <Apart><Icon w={10} h={11} color="#fff"><path d="M5 1.500L9 10H1Z" /></Icon></Apart>
            </Pill>
            <Pill $bg={shelfBlue}>日期 (天) (复制)</Pill>
          </Shelf>
          <ViewRow>
            <Sheet>
              <SheetTitle>工作表 9</SheetTitle>
              <TableClip><DateTable /></TableClip>
              <SheetTrackV><Thumb /></SheetTrackV>
              <SheetTrackH $horizontal><Thumb /></SheetTrackH>
            </Sheet>
            <QuickFilter>
              <QuickTitle>聚合(分页)</QuickTitle>
              {filterValues.map((v, i) => (
                <CheckRow key={v} $small={i === 0}>
                  <Check type="checkbox" defaultChecked />
                  {v}
                </CheckRow>
              ))}
            </QuickFilter>
          </ViewRow>
        </ViewColumn>
      </Workspace>
      <TabBar>
        <SourceTab $w={163}>
          <Icon w={9} h={12} color="#666"><path d="M.7 2.500V9.500C.7 12 8.300 12 8.300 9.500V2.500C8.300 0 .7 0 .7 2.500Q1 4 4.500 4T8.300 2.500" /></Icon>
          数据源
        </SourceTab>
        {sheets.map(([name, w]) => <SheetTab key={name} $w={w} $active={name === "9"}>工作表 {name}</SheetTab>)}
        <NewTab $w={32} aria-label="新建工作表">
          <Icon w={16} h={16} sw={1.2}><path d="M8.500 12.500H1.500V1.500H12.500V8M4.500 9.500V7M7 9.500V4M9.500 9V6" /><path d="M12 8.500V15.500M8.500 12H15.500" strokeWidth="2" /></Icon>
        </NewTab>
        <NewTab $w={32} aria-label="新建仪表板">
          <Icon w={16} h={16} sw={1.2}><path d="M8.500 12.500H1.500V1.500H12.500V8M1.500 6.500H12.500M7 1.500V12.500" /><path d="M12 8.500V15.500M8.500 12H15.500" strokeWidth="2" /></Icon>
        </NewTab>
        <NewTab $w={32} aria-label="新建故事">
          <Icon w={16} h={16} sw={1.2}><path d="M7 13L1.500 11V1.500L7 4L12.500 1.500V8M7 4V13" /><path d="M12 8.500V15.500M8.500 12H15.500" strokeWidth="2" /></Icon>
        </NewTab>
      </TabBar>
      <EdgeStrip />
      <Arrow width="262" height="56" viewBox="0 0 262 56" fill="none" stroke="#e91c24" strokeWidth="5" strokeLinecap="round" strokeLinejoin="round" aria-hidden="true">
        <path d="M6 37L252 24M227 7L252 24L229 48" />
      </Arrow>
      <Watermark>掘金技术社区 @ 小小数分家</Watermark>
    </Page>
  );
}
